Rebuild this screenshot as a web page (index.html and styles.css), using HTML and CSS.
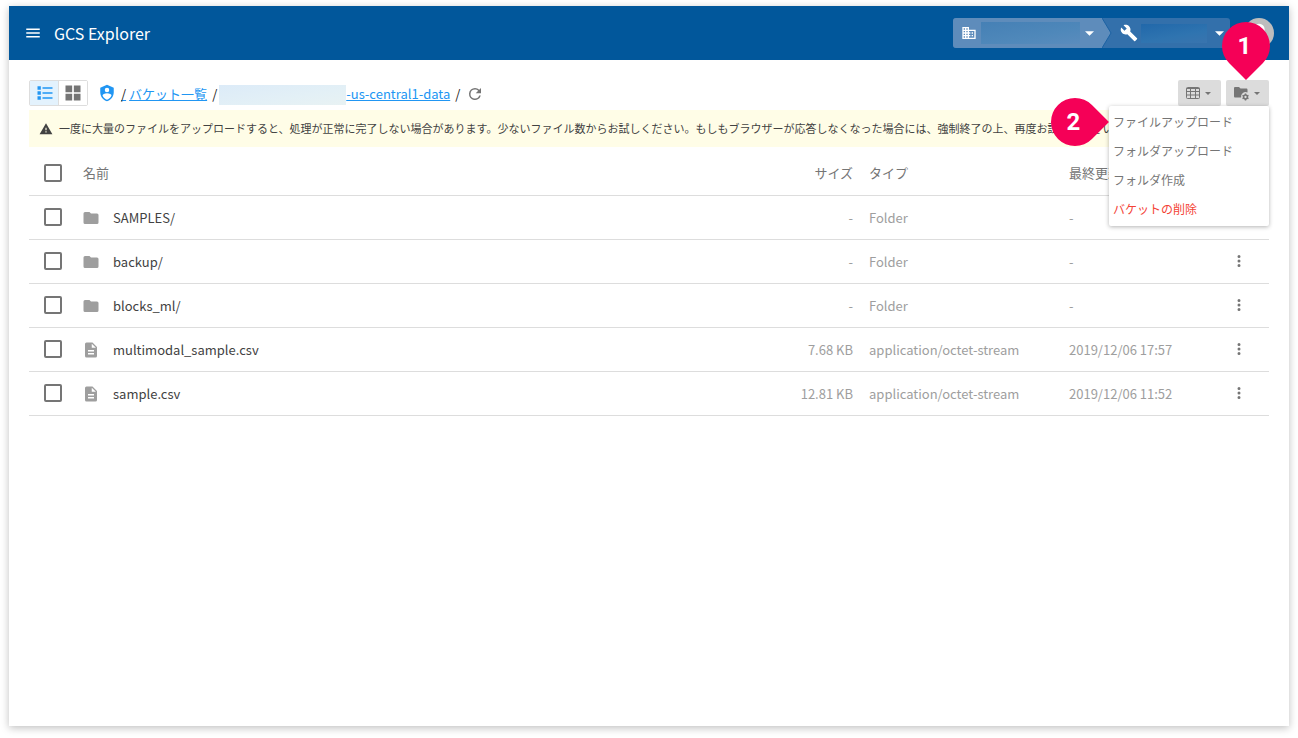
FILE: index.html
```html
<!DOCTYPE html>
<html lang="ja">
<head>
<meta charset="utf-8">
<meta name="viewport" content="width=device-width, initial-scale=1">
<title>GCS Explorer</title>
<link rel="stylesheet" href="styles.css">
</head>
<body>
<svg class="sprite" aria-hidden="true">
  <symbol id="folder" viewBox="0 0 24 24"><path d="M10 4H4a2 2 0 0 0-2 2v12a2 2 0 0 0 2 2h16a2 2 0 0 0 2-2V8a2 2 0 0 0-2-2h-8z"/></symbol>
  <symbol id="file" viewBox="0 0 24 24"><path d="M14 2H6a2 2 0 0 0-2 2v16a2 2 0 0 0 2 2h12a2 2 0 0 0 2-2V8zm2 16H8v-2h8zm0-4H8v-2h8zm-3-5V3.500L18.500 9z"/></symbol>
  <symbol id="dots" viewBox="0 0 24 24"><path d="M12 8a2 2 0 1 0 0-4 2 2 0 0 0 0 4m0 2a2 2 0 1 0 0 4 2 2 0 0 0 0-4m0 6a2 2 0 1 0 0 4 2 2 0 0 0 0-4"/></symbol>
  <symbol id="caret" viewBox="0 0 10 5"><path d="M0 0h10L5 5z"/></symbol>
</svg>
<div class="app">
  <header class="appbar">
    <button class="plain" aria-label="メニュー"><svg class="icon icon-md" viewBox="0 0 24 24"><path d="M3 6h18v2H3zm0 5h18v2H3zm0 5h18v2H3z"/></svg></button>
    <h1 class="title">GCS Explorer</h1>
    <div class="switcher">
      <button class="segment segment-org" aria-label="組織">
        <svg class="icon icon-sm" viewBox="0 0 24 24"><path d="M18,15H16V17H18M18,11H16V13H18M20,19H12V17H14V15H12V13H14V11H12V9H20M10,7H8V5H10M10,11H8V9H10M10,15H8V13H10M10,19H8V17H10M6,7H4V5H6M6,11H4V9H6M6,15H4V13H6M6,19H4V17H6M12,7V3H2V21H22V7H12Z"/></svg>
        <span class="mask mask-org"></span>
        <svg class="caret-lg"><use href="#caret"/></svg>
      </button>
      <svg class="divider" viewBox="0 0 10 30"><path class="divider-fill" d="M0 0l9 15-9 15z"/><path class="divider-line" d="M0 0l9 15-9 15"/></svg>
      <button class="segment segment-project" aria-label="プロジェクト">
        <svg class="icon icon-md" viewBox="0 0 24 24"><path d="M22.700 19l-9.100-9.100c.9-2.300.4-5-1.500-6.900-2-2-5-2.400-7.400-1.300L9 6 6 9 1.600 4.700C.4 7.100.9 10.100 2.900 12.100c1.900 1.900 4.600 2.400 6.900 1.500l9.100 9.100c.4.4 1 .4 1.400 0l2.300-2.300c.5-.4.5-1.100.1-1.400z"/></svg>
        <span class="mask mask-project"></span>
        <svg class="caret-lg"><use href="#caret"/></svg>
      </button>
    </div>
    <button class="plain avatar" aria-label="アカウント"><svg viewBox="0 0 32 32"><circle class="avatar-bg" cx="16" cy="16" r="16"/><circle cx="16" cy="12" r="6"/><path d="M5 27c1-6 5-8 11-8s10 2 11 8c-6 6-16 6-22 0z"/></svg></button>
  </header>
  <main class="content">
    <div class="toolbar">
      <div class="toggle">
        <button class="toggle-btn active" aria-label="リスト表示"><svg class="icon icon-lg" viewBox="0 0 24 24"><path d="M3,4H7V8H3V4M9,5V7H21V5H9M3,10H7V14H3V10M9,11V13H21V11H9M3,16H7V20H3V16M9,17V19H21V17H9"/></svg></button>
        <button class="toggle-btn" aria-label="グリッド表示"><svg class="icon icon-lg" viewBox="0 0 24 24"><path d="M3,11H11V3H3M3,21H11V13H3M13,21H21V13H13M13,3V11H21V3"/></svg></button>
      </div>
      <nav class="crumbs" aria-label="パス">
        <svg class="icon icon-shield" viewBox="0 0 24 24"><path d="M12,1L3,5V11C3,16.550 6.840,21.740 12,23C17.160,21.740 21,16.550 21,11V5L12,1M12,5A3,3 0 0,1 15,8A3,3 0 0,1 12,11A3,3 0 0,1 9,8A3,3 0 0,1 12,5M17.130,17C15.920,18.850 14.110,20.240 12,20.920C9.870,20.240 8.070,18.850 6.870,17C6.530,16.500 6.240,16 6,15.470C6,13.820 8.710,12.470 12,12.470C15.290,12.470 18,13.790 18,15.470C17.760,16 17.470,16.500 17.130,17Z"/></svg>
        <a href="#" class="root"><span class="slash">/</span></a>
        <a href="#" class="buckets">バケット一覧</a>
        <span class="slash sep">/</span>
        <a href="#" class="bucket"><span class="mask mask-bucket"></span>-us-central1-data</a>
        <span class="slash last">/</span>
        <button class="plain refresh" aria-label="更新"><svg class="icon icon-md" viewBox="0 0 24 24"><path d="M17.650 6.350A7.960 7.960 0 0 0 12 4a8 8 0 1 0 7.730 10h-2.080A6 6 0 1 1 12 6c1.660 0 3.140.69 4.220 1.780L13 11h7V4z"/></svg></button>
      </nav>
      <div class="actions">
        <button class="drop" aria-label="表示列"><svg class="icon icon-table" viewBox="0 0 14 12"><path class="grid-line" d="M1.500.5h11a1 1 0 0 1 1 1v9a1 1 0 0 1-1 1h-11a1 1 0 0 1-1-1v-9a1 1 0 0 1 1-1zM.5 1.500h13M.5 4.500h13M.5 8h13M4.500 2v9M9.500 2v9"/></svg><svg class="caret-sm"><use href="#caret"/></svg></button>
        <div class="drop-wrap">
          <button class="drop" aria-label="フォルダ操作" aria-expanded="true"><svg class="icon icon-folder" viewBox="0 0 15 14"><path d="M1.300 0H5l1.500 1.500h5.700c.8 0 1.300.5 1.300 1.300v2.700a4.600 4.600 0 0 0-6.400 5H1.300C.5 10.500 0 10 0 9.200V1.300C0 .5.500 0 1.300 0z"/><circle class="gear-ring" cx="11.500" cy="10" r="1.900"/><path class="gear-teeth" d="M11.500 6.600v1.500M11.500 11.900v1.500M8.500 8.300l1.400.8M13.100 10.900l1.400.8M8.500 11.700l1.400-.8M13.100 9.100l1.400-.8"/></svg><svg class="caret-sm"><use href="#caret"/></svg></button>
          <div class="menu">
            <button class="item">ファイルアップロード</button>
            <button class="item">フォルダアップロード</button>
            <button class="item">フォルダ作成</button>
            <button class="item danger">バケットの削除</button>
            <span class="pin pin-right">2</span>
          </div>
          <span class="pin pin-down">1</span>
        </div>
      </div>
    </div>
    <p class="notice"><svg class="icon icon-warn" viewBox="0 0 24 24"><path d="M1 21h22L12 2zm12-3h-2v-2h2zm0-4h-2v-4h2z"/></svg><span class="notice-text">一度に大量のファイルをアップロードすると、処理が正常に完了しない場合があります。少ないファイル数からお試しください。もしもブラウザーが応答しなくなった場合には、強制終了の上、再度お試しください。</span></p>
    <table class="files">
      <thead>
        <tr><th class="c-check"><input type="checkbox" class="check" aria-label="すべて選択"></th><th>名前</th><th class="c-size">サイズ</th><th class="c-type">タイプ</th><th class="c-date">最終更新</th><th class="c-more"></th></tr>
      </thead>
      <tbody>
        <tr><td class="c-check"><input type="checkbox" class="check" aria-label="SAMPLES/"></td><td><span class="name"><svg class="icon icon-row"><use href="#folder"/></svg>SAMPLES/</span></td><td class="c-size">-</td><td>Folder</td><td>-</td><td class="c-more"><button class="plain more" aria-label="操作"><svg class="icon icon-md"><use href="#dots"/></svg></button></td></tr>
        <tr><td class="c-check"><input type="checkbox" class="check" aria-label="backup/"></td><td><span class="name"><svg class="icon icon-row"><use href="#folder"/></svg>backup/</span></td><td class="c-size">-</td><td>Folder</td><td>-</td><td class="c-more"><button class="plain more" aria-label="操作"><svg class="icon icon-md"><use href="#dots"/></svg></button></td></tr>
        <tr><td class="c-check"><input type="checkbox" class="check" aria-label="blocks_ml/"></td><td><span class="name"><svg class="icon icon-row"><use href="#folder"/></svg>blocks_ml/</span></td><td class="c-size">-</td><td>Folder</td><td>-</td><td class="c-more"><button class="plain more" aria-label="操作"><svg class="icon icon-md"><use href="#dots"/></svg></button></td></tr>
        <tr><td class="c-check"><input type="checkbox" class="check" aria-label="multimodal_sample.csv"></td><td><span class="name"><svg class="icon icon-row"><use href="#file"/></svg>multimodal_sample.csv</span></td><td class="c-size">7.68 KB</td><td>application/octet-stream</td><td>2019/12/06 17:57</td><td class="c-more"><button class="plain more" aria-label="操作"><svg class="icon icon-md"><use href="#dots"/></svg></button></td></tr>
        <tr><td class="c-check"><input type="checkbox" class="check" aria-label="sample.csv"></td><td><span class="name"><svg class="icon icon-row"><use href="#file"/></svg>sample.csv</span></td><td class="c-size">12.81 KB</td><td>application/octet-stream</td><td>2019/12/06 11:52</td><td class="c-more"><button class="plain more" aria-label="操作"><svg class="icon icon-md"><use href="#dots"/></svg></button></td></tr>
      </tbody>
    </table>
  </main>
</div>
</body>
</html>
```

FILE: styles.css
```css
* { box-sizing: border-box; }

body {
  margin: 0;
  min-height: 100vh;
  padding: 6px 9px 12px;
  display: flex;
  flex-direction: column;
  background: #fff;
  color: #424242;
  font: 14px/20px "Noto Sans CJK JP", sans-serif;
}

button { font: inherit; color: inherit; margin: 0; border: 0; cursor: pointer; }

.sprite { position: absolute; width: 0; height: 0; }
.icon { fill: currentColor; flex: none; display: block; }
.icon-sm { width: 16px; height: 16px; }
.icon-md { width: 18px; height: 18px; }
.icon-lg { width: 20px; height: 20px; }
.plain { padding: 0; background: none; display: block; }

.app {
  flex: 1;
  display: flex;
  flex-direction: column;
  background: #fff;
  box-shadow: 0 2px 8px rgba(0, 0, 0, 0.25);
}

/* App bar */
.appbar {
  height: 54px;
  padding: 0 15px;
  display: flex;
  align-items: center;
  background: #01579b;
  color: #fff;
}
.title { margin: 0 auto 0 12px; font-size: 16px; line-height: 24px; font-weight: 400; }
.switcher {
  display: flex;
  height: 30px;
  margin-right: 14px;
  border-radius: 3px;
  overflow: hidden;
  background: #3370ab;
}
.segment { display: flex; align-items: center; background: none; }
.segment-org { padding: 0 8px; background: #5e8cbb; }
.segment-project { padding: 0 6px 0 8px; }
.divider { width: 10px; height: 30px; }
.divider-fill { fill: #5e8cbb; }
.divider-line { fill: none; stroke: #1c62a3; }
.caret-lg { width: 9px; height: 5px; fill: currentColor; }
.mask { display: block; }
.mask-org { width: 99px; height: 22px; margin: 0 5px 0 4px; background: linear-gradient(170deg, #4580b5, #4f88ba 60%, #5a8cbd); }
.mask-project { width: 66px; height: 19px; margin: 0 8px 0 3px; background: linear-gradient(170deg, #2168aa, #2f74b0 60%, #3974ae); }
.avatar { width: 30px; height: 32px; fill: #fff; }
.avatar svg { display: block; width: 100%; height: 100%; }
.avatar-bg { fill: #bdbdbd; }

/* Toolbar */
.content { padding: 20px; }
.toolbar { display: flex; align-items: center; height: 26px; }
.toggle { display: flex; border: 1px solid #ddd; border-radius: 2px; }
.toggle-btn { width: 28px; height: 24px; padding: 0; display: grid; place-items: center; background: #fff; color: #757575; }
.toggle-btn.active { width: 29px; padding-left: 1px; border-right: 1px solid #ddd; background: #e3f2fd; color: #2196f3; }
.crumbs { display: flex; align-items: center; margin: 2px auto 0 10px; font-size: 13px; color: #212121; }
.crumbs a { color: #2196f3; text-underline-offset: 1px; }
.icon-shield { width: 18px; height: 18px; margin-bottom: 2px; color: #2196f3; }
.root { margin-left: 5px; }
.slash { color: #212121; }
.buckets { margin-left: 3px; }
.sep { margin: 0 2px 0 5px; }
.bucket { display: flex; align-items: center; }
.mask-bucket { width: 127px; height: 20px; margin-top: 1px; background: linear-gradient(170deg, #dcebf8, #e3f0f6 60%, #e8f2f3); }
.last { margin: 0 6px 0 5px; }
.refresh { color: #757575; }

.actions { display: flex; gap: 5px; }
.drop-wrap { position: relative; }
.drop {
  width: 43px;
  height: 26px;
  padding: 0 2px 0 0;
  display: flex;
  align-items: center;
  justify-content: center;
  gap: 5px;
  border-radius: 2px;
  background: #dcdcdc;
  color: #757575;
}
.icon-table { width: 14px; height: 12px; }
.icon-folder { width: 15px; height: 14px; margin-top: 2px; }
.grid-line { fill: none; stroke: currentColor; }
.gear-ring { fill: none; stroke: currentColor; stroke-width: 1.5; }
.gear-teeth { fill: none; stroke: currentColor; stroke-width: 1.5; }
.caret-sm { width: 6px; height: 3px; fill: currentColor; }

.menu {
  position: absolute;
  z-index: 2;
  top: 100%;
  right: 0;
  width: 160px;
  padding: 2px 0;
  border-radius: 2px;
  background: #fff;
  box-shadow: 0 1px 4px rgba(0, 0, 0, 0.3);
}
.item {
  display: block;
  width: 100%;
  height: 29px;
  padding: 0 4px 2px;
  background: none;
  color: #757575;
  font-size: 12px;
  text-align: left;
}
.item.danger { color: #f44336; }

/* Numbered callouts */
.pin {
  position: absolute;
  z-index: 3;
  width: 48px;
  height: 48px;
  padding-right: 3px;
  color: #fff;
  font: 700 24px/48px Roboto, sans-serif;
  text-align: center;
}
.pin::before {
  content: "";
  position: absolute;
  z-index: -1;
  inset: 0;
  border-radius: 50% 50% 0 50%;
  background: #f50057;
}
.pin-down { right: -1px; bottom: 36px; }
.pin-down::before { transform: rotate(45deg); }
.pin-right { right: 170px; top: -8px; }
.pin-right::before { transform: rotate(-45deg); }

/* Notice */
.notice {
  display: flex;
  align-items: center;
  gap: 6px;
  margin: 4px 0 5px;
  padding: 8px 10px;
  background: #fffde7;
  font-size: 11px;
  line-height: 21px;
}
.icon-warn { width: 14px; height: 14px; }

/* File table */
.files { width: 100%; table-layout: fixed; border-collapse: separate; border-spacing: 0; font-size: 13px; }
.files th, .files td {
  height: 44px;
  padding: 0 8px;
  border-bottom: 1px solid #ddd;
  text-align: left;
  font-weight: 400;
  white-space: nowrap;
  color: #9e9e9e;
}
.files th { padding-bottom: 2px; color: #757575; }
.files .c-check { width: 46px; padding: 0 0 2px 15px; }
.files .c-size { width: 120px; text-align: right; }
.files .c-type { width: 200px; }
.files .c-date { width: 148px; }
.files .c-more { width: 60px; padding-bottom: 2px; }
.check {
  appearance: none;
  display: block;
  width: 18px;
  height: 18px;
  margin: 0;
  border: 2px solid #757575;
  border-radius: 2px;
  background: #fff;
}
.check:checked { background: #2196f3; }
.name { display: flex; align-items: center; gap: 13px; color: #424242; }
.icon-row { width: 18px; height: 18px; margin-left: -1px; color: #9e9e9e; }
.more { margin: 0 auto; color: #757575; }
```
